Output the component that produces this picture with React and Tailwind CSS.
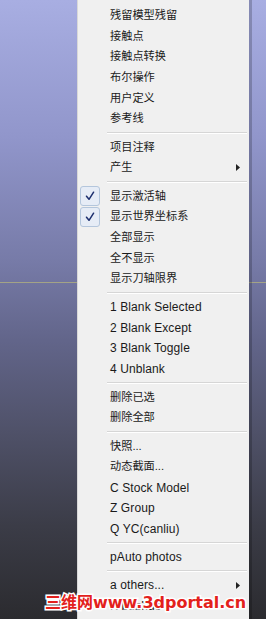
const items = [
  { label: "残留模型残留" },
  { label: "接触点" },
  { label: "接触点转换" },
  { label: "布尔操作" },
  { label: "用户定义" },
  { label: "参考线" },
  { sep: true },
  { label: "项目注释" },
  { label: "产生", sub: true },
  { sep: true },
  { label: "显示激活轴", checked: true },
  { label: "显示世界坐标系", checked: true },
  { label: "全部显示" },
  { label: "全不显示" },
  { label: "显示刀轴限界" },
  { sep: true },
  { label: "1 Blank Selected", latin: true },
  { label: "2 Blank Except", latin: true },
  { label: "3 Blank Toggle", latin: true },
  { label: "4 Unblank", latin: true },
  { sep: true },
  { label: "删除已选" },
  { label: "删除全部" },
  { sep: true },
  { label: "快照..." },
  { label: "动态截面..." },
  { label: "C Stock Model", latin: true },
  { label: "Z Group", latin: true },
  { label: "Q YC(canliu)", latin: true },
  { sep: true },
  { label: "pAuto photos", latin: true },
  { sep: true },
  { label: "a others...", latin: true, sub: true },
  { label: "K buzhuo", latin: true },
]

function CheckBox() {
  return (
    <div className="ml-[2px] flex h-[20px] w-[20px] items-center justify-center rounded-[3px] border border-[#b4c6dc] bg-[#e6ecf6]">
      <svg width="10" height="10" viewBox="0 0 10 10">
        <path d="M1.5 5.2 L4 8.3 L8.6 1.2" fill="none" stroke="#1d2f6e" strokeWidth="1.5" strokeLinecap="round" strokeLinejoin="round" />
      </svg>
    </div>
  )
}

function Row({ item }) {
  if (item.sep) {
    return (
      <div className="ml-[29px] mr-[2px] flex h-[7.5px] flex-col justify-center">
        <div className="h-px bg-[#d6d6d6]" />
        <div className="h-px bg-white" />
      </div>
    )
  }
  return (
    <div className="flex h-[20.7px] items-center pr-[9px]">
      <div className="flex w-[32px] shrink-0 items-center">
        {item.checked && <CheckBox />}
      </div>
      <div
        className={
          item.latin
            ? "flex-1 text-[12px] tracking-[0.1px] text-[#1a1a1a]"
            : "flex-1 text-[11.2px] text-[#1a1a1a]"
        }
      >
        {item.label}
      </div>
      {item.sub && (
        <svg width="4" height="7" viewBox="0 0 4 7">
          <path d="M0 0 L4 3.5 L0 7 Z" fill="#222" />
        </svg>
      )}
    </div>
  )
}

export default function App() {
  return (
    <div
      className="relative flex h-[619px] w-[266px] overflow-hidden bg-[linear-gradient(to_bottom,transparent_282px,#a3a386_282px,#a3a386_283px,transparent_283px),linear-gradient(to_bottom,#a8aee2_0%,#9196cb_22%,#777ba8_42%,#62658a_55%,#4f5168_70%,#3b3c47_85%,#2b2b2f_100%)]"
      style={{ fontFamily: '"Liberation Sans", "Noto Sans CJK SC", sans-serif' }}
    >
      <div className="w-[77px] shrink-0" />
      <div className="flex shrink-0">
        <div className="w-[172px] border-l border-[#d8d8d8] bg-[#f0f0f0] pt-[5.3px] leading-none">
          {items.map((item, i) => (
            <Row key={i} item={item} />
          ))}
        </div>
        <div className="w-[3px] bg-black/20" />
      </div>

      <div
        className="absolute left-[45px] top-[595px] whitespace-nowrap text-[16px] font-bold leading-none text-[#e3211c] [-webkit-text-stroke:3px_white] [paint-order:stroke_fill]"
        style={{ fontFamily: '"DejaVu Sans", "Noto Sans CJK SC", sans-serif' }}
      >
        三维网www.3dportal.cn
      </div>
    </div>
  )
}
